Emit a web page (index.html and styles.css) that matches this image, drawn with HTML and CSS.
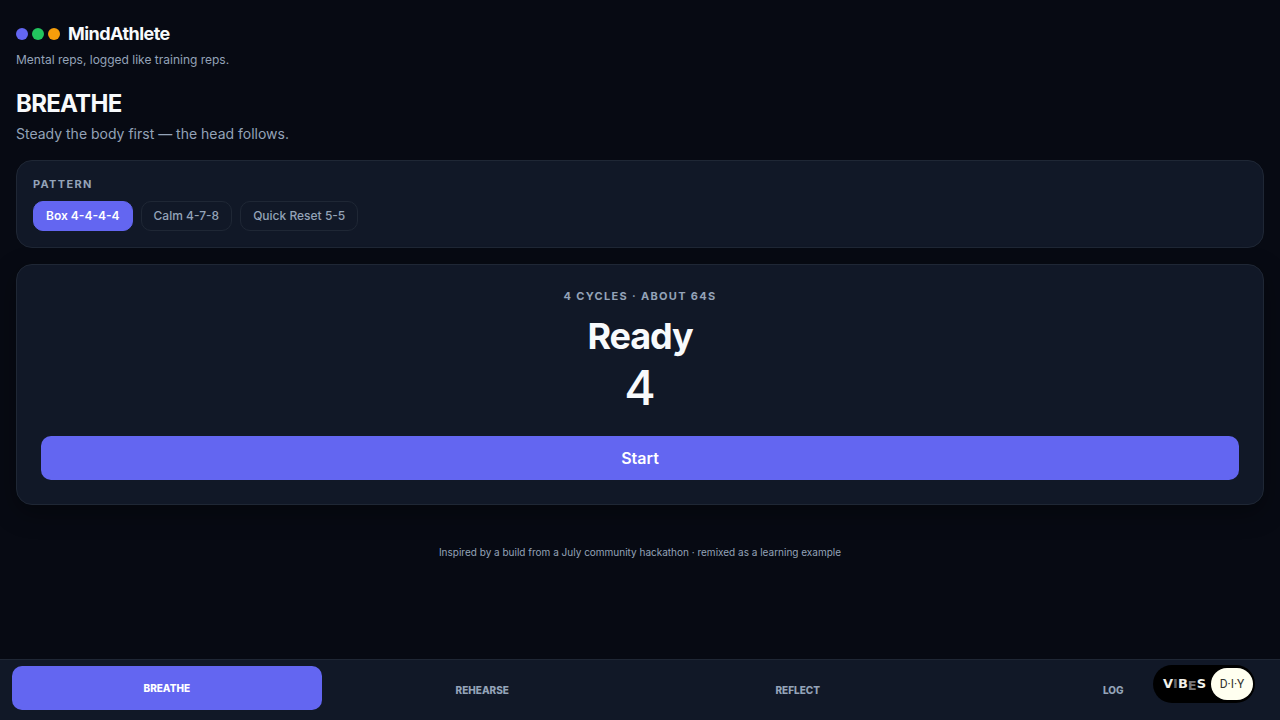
FILE: index.html
```html
<!DOCTYPE html>
<html lang="en">
<head>
<meta charset="utf-8">
<meta name="viewport" content="width=device-width, initial-scale=1">
<title>MindAthlete</title>
<link rel="stylesheet" href="styles.css">
</head>
<body>
<div class="page">
  <header class="header">
    <div class="brand">
      <span class="dots"><i class="dot dot-indigo"></i><i class="dot dot-green"></i><i class="dot dot-amber"></i></span>
      <span class="brand-name">MindAthlete</span>
    </div>
    <p class="tagline">Mental reps, logged like training reps.</p>
  </header>
  <main class="main">
    <div class="intro">
      <h1 class="title">BREATHE</h1>
      <p class="subtitle">Steady the body first — the head follows.</p>
    </div>
    <section class="card">
      <h2 class="label">PATTERN</h2>
      <div class="chips">
        <button class="chip chip-active" type="button">Box 4-4-4-4</button>
        <button class="chip" type="button">Calm 4-7-8</button>
        <button class="chip" type="button">Quick Reset 5-5</button>
      </div>
    </section>
    <section class="card session">
      <p class="label">4 CYCLES · ABOUT 64S</p>
      <p class="phase">Ready</p>
      <p class="count">4</p>
      <button class="start" type="button">Start</button>
    </section>
  </main>
  <footer class="footer">Inspired by a build from a July community hackathon · remixed as a learning example</footer>
</div>
<nav class="tabs">
  <button class="tab tab-active" type="button">BREATHE</button>
  <button class="tab" type="button">REHEARSE</button>
  <button class="tab" type="button">REFLECT</button>
  <button class="tab" type="button">LOG</button>
</nav>
<button class="vibes" type="button" aria-label="Vibes DIY">
  <span class="vibes-word"><span>V</span><span class="vibes-thin">I</span><span>B</span><span class="vibes-low">E</span><span>S</span></span>
  <span class="vibes-diy">D·I·Y</span>
</button>
</body>
</html>
```
FILE: styles.css
```css
* {
  box-sizing: border-box;
}

body {
  margin: 0;
  min-height: 100vh;
  background: #070a13;
  color: #f8fafc;
  font-family: Inter, "Liberation Sans", sans-serif;
}

h1, h2, p {
  margin: 0;
}

button {
  font-family: inherit;
  cursor: pointer;
}

.page {
  padding: 20px 16px 96px;
}

.brand {
  display: flex;
  align-items: center;
  gap: 8px;
}

.dots {
  display: flex;
  gap: 4px;
}

.dot {
  width: 12px;
  height: 12px;
  border-radius: 50%;
}

.dot-indigo { background: #6366f1; }
.dot-green { background: #22c55e; }
.dot-amber { background: #f59e0b; }

.brand-name,
.title,
.phase {
  font-weight: 700;
  letter-spacing: -0.03em;
}

.brand-name {
  font-size: 18px;
  line-height: 28px;
}

.tagline {
  margin-top: 4px;
  color: #94a3b8;
  font-size: 12px;
  line-height: 16px;
}

.main {
  display: flex;
  flex-direction: column;
  gap: 16px;
  margin-top: 20px;
}

.title {
  font-size: 24px;
  line-height: 32px;
}

.subtitle {
  margin-top: 4px;
  color: #94a3b8;
  font-size: 14px;
  line-height: 20px;
}

.card {
  padding: 16px;
  background: #111827;
  border: 1px solid #1f2735;
  border-radius: 16px;
}

.label {
  color: #94a3b8;
  font-size: 11px;
  line-height: 15px;
  font-weight: 700;
  letter-spacing: 0.12em;
}

.chips {
  display: flex;
  flex-wrap: wrap;
  gap: 8px;
  margin-top: 9px;
}

.chip {
  padding: 6px 12px;
  background: transparent;
  border: 1px solid #1f2735;
  border-radius: 10px;
  color: #94a3b8;
  font-size: 12px;
  line-height: 16px;
  font-weight: 500;
}

.chip-active {
  background: #6366f1;
  border-color: #6366f1;
  color: #ffffff;
  font-weight: 600;
}

.session {
  display: flex;
  flex-direction: column;
  padding: 24px;
  text-align: center;
  box-shadow: 0 8px 24px rgba(0, 0, 0, 0.35);
}

.phase {
  margin-top: 12px;
  font-size: 36px;
  line-height: 40px;
}

.count {
  margin-top: 8px;
  font-size: 48px;
  line-height: 48px;
  font-weight: 500;
}

.start {
  height: 44px;
  margin-top: 24px;
  background: #6366f1;
  border: 0;
  border-radius: 10px;
  color: #ffffff;
  font-size: 16px;
  font-weight: 600;
}

.footer {
  margin-top: 40px;
  color: #94a3b8;
  font-size: 10px;
  line-height: 15px;
  text-align: center;
}

.tabs {
  position: fixed;
  right: 0;
  bottom: 0;
  left: 0;
  display: grid;
  grid-template-columns: repeat(4, 1fr);
  gap: 6px;
  padding: 8px 12px;
  background: #111827;
  border-top: 1px solid #1f2735;
}

.tab {
  height: 44px;
  background: transparent;
  border: 0;
  border-radius: 10px;
  color: #94a3b8;
  font-size: 10px;
  font-weight: 800;
}

.tab-active {
  background: #6366f1;
  color: #ffffff;
  transform: translateY(-2px);
}

.vibes {
  position: fixed;
  right: 25px;
  bottom: 17px;
  display: flex;
  align-items: center;
  justify-content: space-between;
  width: 102px;
  height: 38px;
  padding: 0 2px 0 10px;
  background: #000000;
  border: 0;
  border-radius: 19px;
  color: #f2f2ec;
}

.vibes-word {
  display: flex;
  align-items: center;
  font-family: "DejaVu Sans", sans-serif;
  font-size: 13px;
  line-height: 16px;
  font-weight: 700;
}

.vibes-thin {
  color: #66666a;
}

.vibes-low {
  padding-top: 3px;
  color: #77777a;
}

.vibes-diy {
  width: 42px;
  height: 32px;
  background: #fffff0;
  border-radius: 16px;
  color: #33332f;
  font-family: Roboto, sans-serif;
  font-size: 12px;
  line-height: 32px;
  font-weight: 400;
  text-align: center;
}
```
